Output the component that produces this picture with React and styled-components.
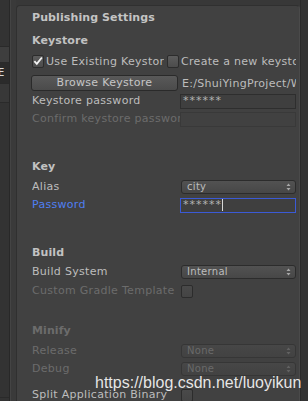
import React from "react";
import styled, { createGlobalStyle } from "styled-components";

const GlobalStyle = createGlobalStyle`
  html, body {
    margin: 0;
    padding: 0;
    background: #383838;
  }
  body {
    font-family: "DejaVu Sans", "Liberation Sans", sans-serif;
    font-size: 11px;
    letter-spacing: 0.3px;
  }
`;

const tones = {
  normal: "#bdbdbd",
  disabled: "#6c6c6c",
  focus: "#4f7ff2",
};

const StyledWrapper = styled.div`
  position: relative;
  display: flex;
  width: 308px;
  height: 401px;
  overflow: hidden;
  background: #383838;
`;

const StyledLeftStrip = styled.div`
  display: flex;
  width: 16px;
  flex-shrink: 0;
`;

const StyledList = styled.div`
  display: flex;
  flex-direction: column;
  width: 9px;
  background: #333333;
`;

const StyledListItem = styled.div`
  height: ${({ $h }) => $h}px;
  background: ${({ $bg }) => $bg};
  border-bottom: 1px solid #2a2a2a;
  color: #d8d8d8;
  font-size: 10px;
  line-height: ${({ $h }) => $h}px;
  overflow: hidden;
  white-space: nowrap;
  text-indent: -2px;
`;

const StyledDivider = styled.div`
  width: 2px;
  background: linear-gradient(to right, #282828 50%, #444444 50%);
`;

const StyledGutter = styled.div`
  flex: 1;
  background: #3a3a3a;
`;

const StyledPanel = styled.div`
  flex: 1;
  margin-top: 5px;
  background: #414141;
  border: 1px solid #303030;
  border-right-color: #4a4a4a;
  border-bottom: none;
  border-top-left-radius: 4px;
  border-top-right-radius: 4px;
  padding: 3px 3px 0 15px;
  display: flex;
  flex-direction: column;
  overflow: hidden;
`;

const StyledRightStrip = styled.div`
  width: 7px;
  flex-shrink: 0;
  background: #333333;
  border-left: 1px solid #2a2a2a;
`;

const StyledTitle = styled.div`
  height: 18px;
  line-height: 18px;
  font-weight: bold;
  letter-spacing: 0.1px;
  color: #c4c4c4;
  white-space: nowrap;
`;

const StyledSection = styled.div`
  display: flex;
  flex-direction: column;
  margin-top: ${({ $gap }) => $gap}px;
`;

const StyledHeader = styled.div`
  height: 18px;
  line-height: 18px;
  font-weight: bold;
  letter-spacing: 0.1px;
  color: ${({ $disabled }) => ($disabled ? tones.disabled : "#c2c2c2")};
  margin-bottom: ${({ $after }) => $after}px;
`;

const StyledRow = styled.div`
  display: grid;
  grid-template-columns: 148px 1fr;
  align-items: center;
  height: 18px;
  margin-top: ${({ $gap }) => $gap || 0}px;
`;

const StyledLabel = styled.div`
  color: ${({ $tone }) => tones[$tone || "normal"]};
  white-space: nowrap;
  overflow: hidden;
  line-height: 18px;
`;

const StyledCheckRow = styled.div`
  display: grid;
  grid-template-columns: 132px 1fr;
  column-gap: 3px;
  align-items: center;
  height: 18px;
  margin-top: 2px;
`;

const StyledCheckItem = styled.div`
  display: flex;
  align-items: center;
  gap: 2px;
  overflow: hidden;
  white-space: nowrap;
  color: ${tones.normal};
`;

const StyledBox = styled.span`
  display: inline-flex;
  align-items: center;
  justify-content: center;
  flex-shrink: 0;
  width: 10px;
  height: 11px;
  border: 1px solid #2c2c2c;
  border-radius: 2px;
  background: ${({ $dim }) =>
    $dim
      ? "linear-gradient(#4a4a4a, #444444)"
      : "linear-gradient(#5c5c5c, #4c4c4c)"};
  margin-left: ${({ $offset }) => $offset || 0}px;
`;

const StyledButton = styled.div`
  height: 14px;
  width: 145px;
  margin-left: -1px;
  border: 1px solid #2a2a2a;
  border-radius: 3px;
  background: linear-gradient(#595959, #4b4b4b);
  color: #c6c6c6;
  text-align: center;
  line-height: 14px;
  white-space: nowrap;
`;

const StyledPath = styled.div`
  padding-left: 2px;
  color: ${tones.normal};
  white-space: nowrap;
  overflow: hidden;
`;

const StyledField = styled.div`
  height: 13px;
  border: 1px solid ${({ $focus, $dim }) => ($focus ? "#3b5ad6" : $dim ? "#393939" : "#2e2e2e")};
  background: ${({ $dim }) => ($dim ? "#414141" : "#3f3f3f")};
  color: #b4b4b4;
  padding-left: 2px;
  line-height: 14px;
  letter-spacing: 1px;
  display: flex;
  align-items: center;
  white-space: nowrap;
`;

const StyledCaret = styled.span`
  display: inline-block;
  width: 1px;
  height: 12px;
  background: #d8d8d8;
`;

const StyledSelect = styled.div`
  display: flex;
  align-items: center;
  justify-content: space-between;
  height: 12px;
  margin-left: 1px;
  padding: 0 4px 0 5px;
  border: 1px solid ${({ $dim }) => ($dim ? "#363636" : "#2c2c2c")};
  border-radius: 3px;
  background: ${({ $dim }) =>
    $dim ? "linear-gradient(#474747, #424242)" : "linear-gradient(#525252, #474747)"};
  color: ${({ $dim }) => ($dim ? "#6a6a6a" : "#bdbdbd")};
  font-size: 10px;
  line-height: 12px;
  white-space: nowrap;
`;

const StyledWatermark = styled.div`
  position: absolute;
  left: 95px;
  top: 373px;
  font-family: "Liberation Sans", Arial, sans-serif;
  font-size: 16px;
  letter-spacing: 0;
  line-height: 20px;
  color: rgba(255, 255, 255, 0.88);
  white-space: nowrap;
  pointer-events: none;
`;

const Check = () => (
  <svg width="11" height="10" viewBox="0 0 11 10">
    <path d="M1.5 5.2 L4.2 8.2 L9.8 1.2" fill="none" stroke="#f2f2f2" strokeWidth="2" />
  </svg>
);

const Arrows = ({ dim }) => (
  <svg width="5" height="8" viewBox="0 0 5 8">
    <path d="M2.5 0.5 L4.5 3 L0.5 3 Z M0.5 5 L4.5 5 L2.5 7.5 Z" fill={dim ? "#626262" : "#a8a8a8"} />
  </svg>
);

const Select = ({ value, dim }) => (
  <StyledSelect $dim={dim}>
    <span>{value}</span>
    <Arrows dim={dim} />
  </StyledSelect>
);

const App = () => (
  <>
    <GlobalStyle />
    <StyledWrapper>
      <StyledLeftStrip>
        <StyledList>
          <StyledListItem $h={46} $bg="#333333" />
          <StyledListItem $h={15} $bg="#3e3e3e" />
          <StyledListItem $h={20} $bg="#2b2b2b">
            E
          </StyledListItem>
          <StyledListItem $h={18} $bg="#383838" />
          <StyledListItem $h={294} $bg="#333333" />
        </StyledList>
        <StyledDivider />
        <StyledGutter />
      </StyledLeftStrip>

      <StyledPanel>
        <StyledTitle>Publishing Settings</StyledTitle>

        <StyledSection $gap={5}>
          <StyledHeader $after={0}>Keystore</StyledHeader>
          <StyledCheckRow>
            <StyledCheckItem>
              <StyledBox>
                <Check />
              </StyledBox>
              <span>Use Existing Keystore</span>
            </StyledCheckItem>
            <StyledCheckItem>
              <StyledBox />
              <span>Create a new keystore</span>
            </StyledCheckItem>
          </StyledCheckRow>
          <StyledRow $gap={4}>
            <StyledButton>Browse Keystore</StyledButton>
            <StyledPath>E:/ShuiYingProject/Win</StyledPath>
          </StyledRow>
          <StyledRow>
            <StyledLabel>Keystore password</StyledLabel>
            <StyledField>******</StyledField>
          </StyledRow>
          <StyledRow>
            <StyledLabel $tone="disabled">Confirm keystore password</StyledLabel>
            <StyledField $dim />
          </StyledRow>
        </StyledSection>

        <StyledSection $gap={30}>
          <StyledHeader $after={2}>Key</StyledHeader>
          <StyledRow>
            <StyledLabel>Alias</StyledLabel>
            <Select value="city" />
          </StyledRow>
          <StyledRow>
            <StyledLabel $tone="focus">Password</StyledLabel>
            <StyledField $focus>
              ******
              <StyledCaret />
            </StyledField>
          </StyledRow>
        </StyledSection>

        <StyledSection $gap={30}>
          <StyledHeader $after={1}>Build</StyledHeader>
          <StyledRow>
            <StyledLabel>Build System</StyledLabel>
            <Select value="Internal" />
          </StyledRow>
          <StyledRow $gap={1}>
            <StyledLabel $tone="disabled">Custom Gradle Template</StyledLabel>
            <StyledBox $dim $offset={1} />
          </StyledRow>
        </StyledSection>

        <StyledSection $gap={22}>
          <StyledHeader $disabled $after={2}>
            Minify
          </StyledHeader>
          <StyledRow>
            <StyledLabel $tone="disabled">Release</StyledLabel>
            <Select value="None" dim />
          </StyledRow>
          <StyledRow>
            <StyledLabel $tone="disabled">Debug</StyledLabel>
            <Select value="None" dim />
          </StyledRow>
        </StyledSection>

        <StyledRow $gap={8}>
          <StyledLabel>Split Application Binary</StyledLabel>
          <StyledBox $dim $offset={1} />
        </StyledRow>
      </StyledPanel>

      <StyledRightStrip />

      <StyledWatermark>https://blog.csdn.net/luoyikun</StyledWatermark>
    </StyledWrapper>
  </>
);

export default App;
